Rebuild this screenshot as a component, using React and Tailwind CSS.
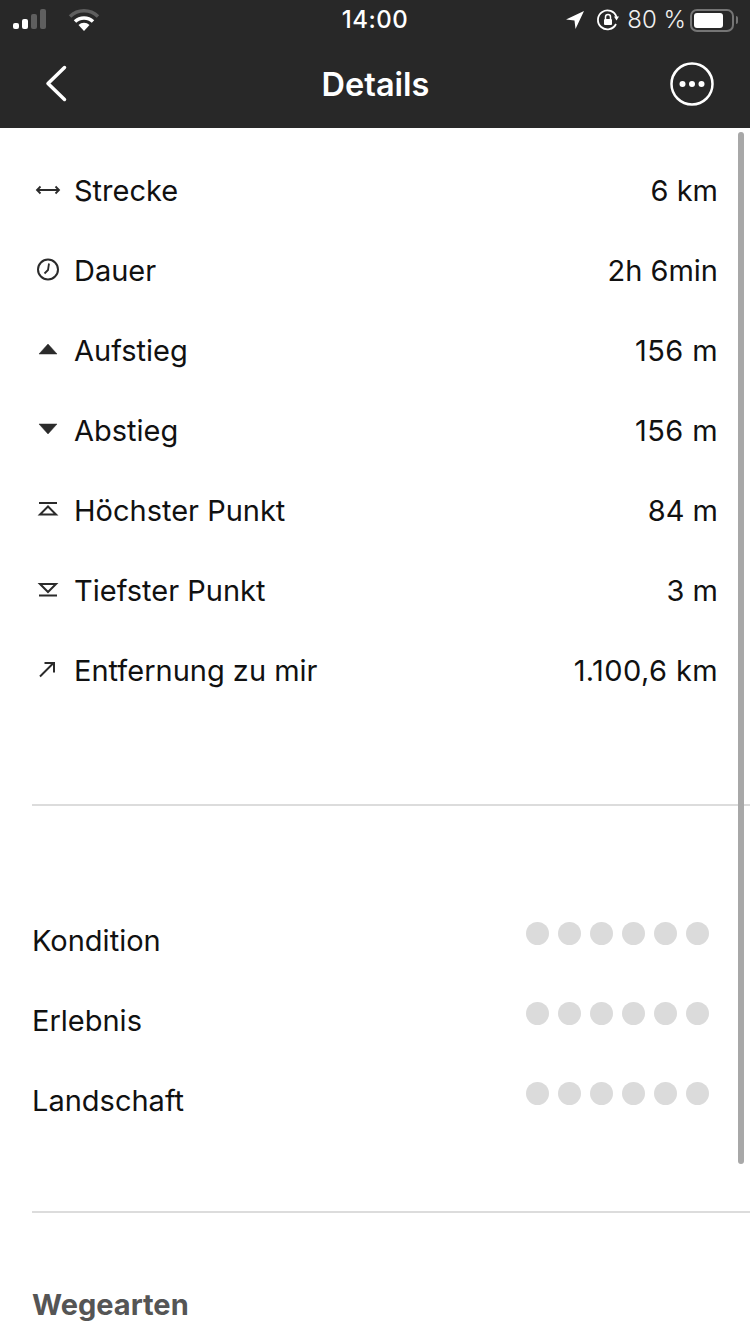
import React from "react";

const stats = [
  { icon: "range", label: "Strecke", value: "6 km" },
  { icon: "clock", label: "Dauer", value: "2h 6min" },
  { icon: "up", label: "Aufstieg", value: "156 m", valueClass: "tracking-[0.4px]" },
  { icon: "down", label: "Abstieg", value: "156 m", valueClass: "tracking-[0.4px]" },
  { icon: "high", label: "Höchster Punkt", value: "84 m" },
  { icon: "low", label: "Tiefster Punkt", value: "3 m" },
  { icon: "distance", label: "Entfernung zu mir", value: "1.100,6 km", valueClass: "tracking-[0.4px]" },
];

const ratings = ["Kondition", "Erlebnis", "Landschaft"];

function StatIcon({ name }) {
  return (
    <svg width="30" height="30" viewBox="0 0 30 30" fill="none" stroke="#2b2b2b" strokeWidth="2" className="shrink-0 -translate-y-[3px]">
      {name === "range" && <path d="M3.500 17h23M7.500 13.500 4 17l3.500 3.500M22.500 13.500 26 17l-3.500 3.500" strokeWidth="1.800" />}
      {name === "clock" && (
        <>
          <circle cx="15" cy="16.500" r="10" />
          <path d="M16 10.500 15 17 11.500 20.500" strokeWidth="1.800" />
        </>
      )}
      {name === "up" && <path d="M6 21 15 11 24 21Z" fill="#2b2b2b" stroke="#2b2b2b" strokeWidth="0.500" strokeLinejoin="round" />}
      {name === "down" && <path d="M6 11h18L15 21Z" fill="#2b2b2b" stroke="#2b2b2b" strokeWidth="0.500" strokeLinejoin="round" />}
      {name === "high" && <path d="M6 10h18M7 21.500h16L15 13.500Z" />}
      {name === "low" && <path d="M6 22.500h18M7 11h16L15 19Z" />}
      {name === "distance" && <path d="M7 23.500 20.500 10M11.500 10h9.500v9.500" />}
    </svg>
  );
}

function StatusBar() {
  return (
    <div className="flex h-10 items-center justify-between text-white">
      <div className="flex items-center">
        <svg width="34" height="24" viewBox="0 0 34 24" className="ml-[12px]">
          <rect x="1" y="15" width="6" height="6" rx="2" fill="#fff" />
          <rect x="10" y="11" width="6" height="10" rx="2" fill="#fff" />
          <rect x="19" y="6" width="6" height="15" rx="2" fill="#5f5f5f" />
          <rect x="28" y="1" width="6" height="20" rx="2" fill="#5f5f5f" />
        </svg>
        <svg width="32" height="24" viewBox="0 0 32 24" className="ml-[22px]">
          <path d="M2 8.500a20 20 0 0 1 28 0" fill="none" stroke="#5f5f5f" strokeWidth="3.500" />
          <path d="M7 13.500a13 13 0 0 1 18 0" fill="none" stroke="#fff" strokeWidth="3.500" />
          <path d="M10.500 17a8 8 0 0 1 11 0L16 23Z" fill="#fff" />
        </svg>
      </div>
      <span className="absolute left-0 right-0 text-center text-[24px] font-medium tracking-[0.5px]">14:00</span>
      <div className="relative flex items-center text-[#f0f0f0]">
        <svg width="20" height="20" viewBox="0 0 20 20">
          <path d="M19 1 1 9.500l8.500 1 1 8.500Z" fill="#fff" />
        </svg>
        <svg width="24" height="24" viewBox="0 0 24 24" fill="none" className="ml-[11px]">
          <path d="M20 16a9.500 9.500 0 1 1 .5-7" stroke="#fff" strokeWidth="1.800" />
          <path d="M18 8.500h5l-2.500 4Z" fill="#fff" />
          <rect x="8" y="11" width="8" height="6" rx="1" fill="#fff" />
          <path d="M9.500 11V9a2.500 2.500 0 0 1 5 0v2" stroke="#fff" strokeWidth="1.500" />
        </svg>
        <span className="ml-[7px] text-[24px] font-light">80 %</span>
        <div className="ml-[4px] flex h-[23px] w-[44px] items-center rounded-[7px] border-2 border-[#757575] p-[2px]">
          <div className="h-full w-[80%] rounded-[3px] bg-white" />
        </div>
        <div className="ml-[2px] mr-[12px] h-[8px] w-[2px] rounded-r-sm bg-[#757575]" />
      </div>
    </div>
  );
}

function Header() {
  return (
    <header className="bg-[#282828]">
      <StatusBar />
      <div className="flex h-[88px] items-center justify-between pl-[40px] pr-[36px]">
        <div className="w-[41px]">
          <svg width="32" height="44" viewBox="0 0 32 44" fill="none" stroke="#fff" strokeWidth="3.500" strokeLinecap="round" strokeLinejoin="round">
            <path d="M24.500 5.500 8 21.500l16.500 16" />
          </svg>
        </div>
        <h1 className="pt-[2px] text-[32.500px] font-semibold text-white">Details</h1>
        <svg width="44" height="44" viewBox="0 0 44 44" fill="none">
          <circle cx="22" cy="22" r="20.500" stroke="#fff" strokeWidth="2.500" />
          <circle cx="12.500" cy="22" r="3" fill="#fff" />
          <circle cx="22" cy="22" r="3" fill="#fff" />
          <circle cx="31.500" cy="22" r="3" fill="#fff" />
        </svg>
      </div>
    </header>
  );
}

export default function App() {
  return (
    <div className="relative h-[1334px] w-[750px] overflow-hidden bg-white font-['Inter','Liberation_Sans',sans-serif] text-[#111]">
      <Header />

      {/* scroll indicator */}
      <div className="absolute left-[738px] top-[132px] h-[1032px] w-[6px] rounded-full bg-[#a8a8a8]" />

      <main className="pt-[23px]">
        <section className="pl-[33px] pr-[32px]">
          {stats.map((row) => (
            <div key={row.label} className="flex h-[80px] items-center justify-between text-[29px]">
              <div className="flex items-center gap-[11px]">
                <StatIcon name={row.icon} />
                <span>{row.label}</span>
              </div>
              <span className={row.valueClass}>{row.value}</span>
            </div>
          ))}
        </section>

        <div className="ml-[32px] mt-[93px] h-[2px] bg-[#dcdcdc]" />

        <section className="pl-[32px] pr-[41px] pt-[95px]">
          {ratings.map((name) => (
            <div key={name} className="flex h-[80px] items-center justify-between text-[29px]">
              <span>{name}</span>
              <div className="flex -translate-y-[8px] gap-[9px]">
                {[0, 1, 2, 3, 4, 5].map((i) => (
                  <div key={i} className="h-[23px] w-[23px] rounded-full bg-[#dbdbdb]" />
                ))}
              </div>
            </div>
          ))}
        </section>

        <div className="ml-[32px] mt-[70px] h-[2px] bg-[#dcdcdc]" />

        <h2 className="ml-[32px] mt-[70px] text-[29px] font-bold text-[#555]">Wegearten</h2>
      </main>
    </div>
  );
}
